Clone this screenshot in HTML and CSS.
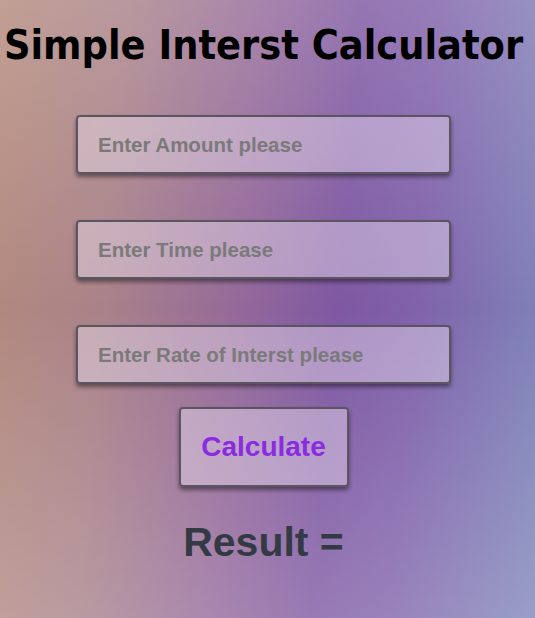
FILE: index.html
```html
<!DOCTYPE html>
<html>
<head>
<meta charset="utf-8">
<link rel="stylesheet" href="styles.css">
</head>
<body>
<main class="app">
  <h1 class="title">Simple Interst Calculator</h1>
  <form class="form">
    <input class="field" type="text" placeholder="Enter Amount please">
    <input class="field" type="text" placeholder="Enter Time please">
    <input class="field" type="text" placeholder="Enter Rate of Interst please">
    <button class="btn" type="button">Calculate</button>
  </form>
  <h2 class="result">Result =</h2>
</main>
</body>
</html>
```
FILE: styles.css
```css
html, body {
  margin: 0;
  height: 100%;
}
body {
  background:
    linear-gradient(to bottom, rgba(255,255,255,0.18), rgba(255,255,255,0) 50%, rgba(255,255,255,0.2)),
    linear-gradient(95deg, #b48a7c 0%, #a98289 22%, #94699a 45%, #7e58a2 62%, #8062aa 75%, #7f86ba 100%);
  font-family: "Liberation Sans", Arial, sans-serif;
}
.app {
  width: 527px;
  display: flex;
  flex-direction: column;
  align-items: center;
}
.title {
  margin: 16px 0 0;
  font-family: "DejaVu Sans Condensed", "DejaVu Sans", sans-serif;
  font-stretch: condensed;
  font-weight: 700;
  font-size: 41px;
  line-height: 58px;
  color: #000;
  white-space: nowrap;
}
.form {
  margin-top: 41px;
  display: flex;
  flex-direction: column;
  align-items: center;
  gap: 46px;
}
.field {
  box-sizing: border-box;
  width: 375px;
  height: 59px;
  padding: 0 20px;
  border: 2px solid #5a5560;
  border-radius: 4px;
  background: rgba(235, 225, 240, 0.45);
  box-shadow: 0 3px 4px rgba(0,0,0,0.45);
  font-family: "Liberation Sans", Arial, sans-serif;
  font-weight: 700;
  font-size: 20.5px;
  color: #777;
  outline: none;
}
.field::placeholder {
  color: #7a7a7a;
  opacity: 1;
}
.btn {
  box-sizing: border-box;
  margin-top: -23px;
  width: 170px;
  height: 80px;
  border: 2px solid #5a5560;
  border-radius: 4px;
  background: rgba(235, 225, 240, 0.45);
  box-shadow: 0 3px 4px rgba(0,0,0,0.45);
  font-family: "Liberation Sans", Arial, sans-serif;
  font-weight: 700;
  font-size: 28px;
  color: #8a2be2;
  cursor: pointer;
}
.result {
  margin: 30px 0 0;
  font-family: "Liberation Sans", Arial, sans-serif;
  font-weight: 700;
  font-size: 41px;
  line-height: 50px;
  color: #333a44;
}
```
